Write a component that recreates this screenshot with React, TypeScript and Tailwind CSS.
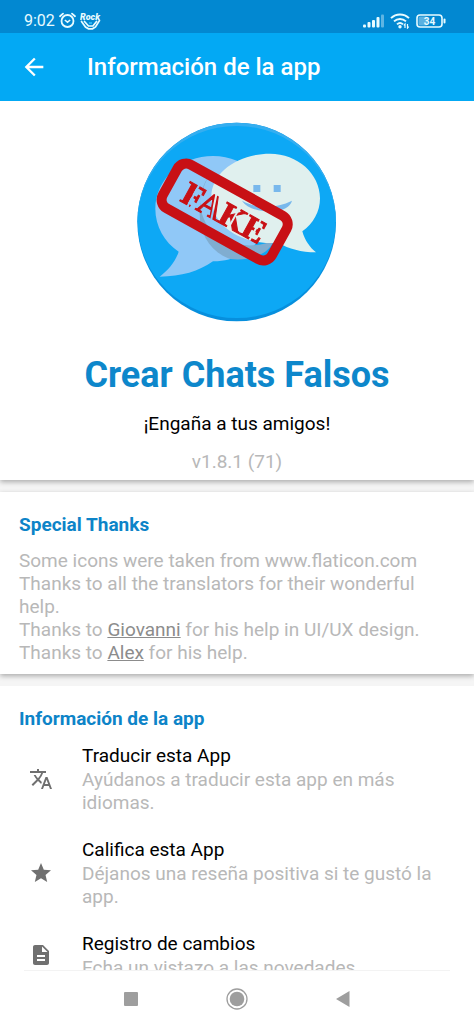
import type { ReactNode } from "react";
import {
  MdArrowBack,
  MdDescription,
  MdStar,
  MdTranslate,
} from "react-icons/md";

type InfoItem = {
  title: string;
  description: string;
  icon: ReactNode;
};

const items: InfoItem[] = [
  {
    title: "Traducir esta App",
    description: "Ayúdanos a traducir esta app en más idiomas.",
    icon: <MdTranslate size={24} />,
  },
  {
    title: "Califica esta App",
    description: "Déjanos una reseña positiva si te gustó la app.",
    icon: <MdStar size={24} />,
  },
  {
    title: "Registro de cambios",
    description: "Echa un vistazo a las novedades.",
    icon: <MdDescription size={24} />,
  },
];

const StatusBar = () => {
  return (
    <div className="flex h-[33px] shrink-0 items-center justify-between bg-[#0288d1] pt-2 pr-7 pl-6 text-[#e8fbff]">
      <div className="flex items-center gap-1">
        <span className="text-base leading-5">9:02</span>
        <svg width="17" height="17" viewBox="0 0 17 17" fill="none" stroke="currentColor">
          <circle cx="8.5" cy="9" r="6" strokeWidth="1.8" />
          <path d="M1 4.2 4 1.6M16 4.2 13 1.6" strokeWidth="1.8" strokeLinecap="round" />
          <path d="m5.8 8 2.7 2.2L11.2 8" strokeWidth="1.5" />
        </svg>
        <svg width="21" height="18" viewBox="0 0 21 18" fill="none" stroke="currentColor">
          <text
            x="0"
            y="8"
            fill="currentColor"
            stroke="none"
            className="font-[Roboto] text-[9px] font-black italic"
          >
            Rock
          </text>
          <path
            d="M1.5 9.5 5.500 15l3 1.800h4l3-1.800 4-6.500M4.500 9.500l4 4.500h4.500l3.500-4.500"
            strokeWidth="1.700"
            strokeLinecap="round"
          />
          <path d="M9 11h3" stroke="#35c4ff" strokeWidth="1.500" />
        </svg>
      </div>
      <div className="flex items-center gap-1.5">
        <svg width="21" height="14" viewBox="0 0 21 14" fill="currentColor">
          <rect x="0" y="10.500" width="3" height="3" rx="1" />
          <rect x="4.500" y="8" width="3" height="5.500" rx="1" />
          <rect x="9" y="6" width="3" height="7.500" rx="1" />
          <rect x="13.500" y="3" width="3" height="10.500" rx="1" />
          <rect x="18" y="0.500" width="3" height="13" rx="1" opacity="0.400" />
        </svg>
        <svg width="20" height="16" viewBox="0 0 20 16" fill="none" stroke="currentColor">
          <path
            d="M1 5.200c5-5 13-5 18 0M4 8.400c3.400-3.300 8.600-3.300 12 0M7 11.400c1.800-1.700 4.200-1.700 6 0"
            strokeWidth="1.900"
          />
          <circle cx="10" cy="13.800" r="1.700" fill="currentColor" stroke="none" />
          <path d="M15 15v-4l-1.200 1.400M17.500 11v4l1.200-1.400" strokeWidth="1.200" />
        </svg>
        <svg width="30" height="14" viewBox="0 0 30 14">
          <rect x="2.500" y="2.500" width="9" height="9" rx="1.500" fill="#fff" opacity="0.350" />
          <rect
            x="1"
            y="1"
            width="25"
            height="12"
            rx="3"
            fill="none"
            stroke="currentColor"
            strokeWidth="1.600"
          />
          <rect x="27.500" y="4.500" width="2" height="5" rx="1" fill="currentColor" />
          <text
            x="13.500"
            y="10.500"
            textAnchor="middle"
            fill="currentColor"
            className="font-[Roboto] text-[10px] font-bold"
          >
            34
          </text>
        </svg>
      </div>
    </div>
  );
};

const AppLogo = () => {
  return (
    <svg
      width="200"
      height="200"
      viewBox="22 19 600 600"
      role="img"
      aria-label="Crear Chats Falsos"
    >
      <defs>
        {/* stencil breaks in the stamp lettering */}
        <mask id="stencil" maskUnits="userSpaceOnUse" x="80" y="200" width="420" height="180">
          <rect x="80" y="200" width="420" height="180" fill="#fff" />
          <path
            d="M179 250v82M236 250l26 82M318 250v82M391 250v82"
            stroke="#000"
            strokeWidth="6"
          />
        </mask>
      </defs>
      <circle cx="321" cy="319" r="298" fill="#078fdd" />
      <path d="M23 319a298 298 0 0 1 596 0z" fill="#35aef0" />
      <ellipse cx="321" cy="319" rx="297" ry="288" fill="#0da8f5" />
      <path
        d="M250 121c94 0 172 70 172 158s-78 159-172 158c-42 30-95 46-160 46 26-20 47-44 57-75-43-29-70-77-70-129 0-88 79-158 173-158z"
        fill="#90c8f7"
      />
      <path
        d="M250 165c-50 55-50 135 0 185 50 42 120 50 182 25-14 40-70 62-130 55-60-20-92-76-92-134 0-60 14-100 40-131z"
        fill="#80add0"
      />
      <path
        d="M421 114c83 0 150 60 150 134 0 40-20 76-53 99 8 28 22 48 41 63-44-1-82-10-112-29-8 1-17 1-26 1-100-2-176-58-176-138 0-76 83-130 176-130z"
        fill="#e0f0ee"
      />
      <path d="M371 208h21v21h-21zM432 208h21v21h-21z" fill="#78b8ec" />
      <path
        d="M337 255c46 24 100 25 150 0-5 18-27 31-57 33-40 0-78-9-93-33z"
        fill="#78b8ec"
      />
      <g transform="rotate(29 285 289)">
        <rect
          x="98"
          y="214"
          width="374"
          height="150"
          rx="30"
          fill="none"
          stroke="#c81015"
          strokeWidth="30"
        />
        <text
          x="285"
          y="325"
          textAnchor="middle"
          fill="#c81015"
          stroke="#c81015"
          strokeWidth="3"
          mask="url(#stencil)"
          className="font-['Liberation_Serif'] text-[101px] font-bold"
        >
          FAKE
        </text>
      </g>
    </svg>
  );
};

const SectionTitle = ({ children }: { children: ReactNode }) => {
  return (
    <h2 className="text-[19px] leading-6 font-bold text-[#0d84c8]">
      {children}
    </h2>
  );
};

const App = () => {
  return (
    <div className="flex h-screen flex-col bg-white font-[Roboto,sans-serif]">
      <StatusBar />
      <header className="flex h-[68px] shrink-0 items-center gap-[39px] bg-[#03a9f4] px-5 text-white">
        <button type="button" aria-label="Volver">
          <MdArrowBack size={28} />
        </button>
        <h1 className="text-2xl font-medium">Información de la app</h1>
      </header>

      <main className="flex min-h-0 flex-1 flex-col gap-3 overflow-hidden bg-[#f5f5f5]">
        <section className="flex shrink-0 flex-col items-center bg-white pt-[21px] pb-[3px] shadow-[0_2px_5px_rgba(0,0,0,0.3)]">
          <AppLogo />
          <h2 className="mt-[27px] text-4xl leading-[52px] font-bold text-[#0d87cb]">
            Crear Chats Falsos
          </h2>
          <p className="mt-2 text-[19px] leading-[30px] text-black">
            ¡Engaña a tus amigos!
          </p>
          <p className="mt-2 text-[19px] leading-[30px] text-[#b8b8b8]">
            v1.8.1 (71)
          </p>
        </section>

        <section className="shrink-0 bg-white px-[19px] pt-[21px] pb-[10px] shadow-[0_2px_5px_rgba(0,0,0,0.3)]">
          <SectionTitle>Special Thanks</SectionTitle>
          <p className="mt-3 text-[19px] leading-[23px] text-[#b8b8b8]">
            Some icons were taken from www.flaticon.com
            <br />
            Thanks to all the translators for their wonderful help.
            <br />
            Thanks to{" "}
            <a href="#giovanni" className="text-[#8c8c8c] underline">
              Giovanni
            </a>{" "}
            for his help in UI/UX design.
            <br />
            Thanks to{" "}
            <a href="#alex" className="text-[#8c8c8c] underline">
              Alex
            </a>{" "}
            for his help.
          </p>
        </section>

        <section className="min-h-0 flex-1 overflow-hidden bg-white px-[19px] pt-[21px]">
          <SectionTitle>Información de la app</SectionTitle>
          <ul className="mt-3">
            {items.map((item) => (
              <li key={item.title} className="mb-[23px]">
                <button
                  type="button"
                  className="flex w-full items-center text-left text-[19px]"
                >
                  <span className="w-[63px] shrink-0 pl-[10px] text-[#707070]">
                    {item.icon}
                  </span>
                  <span>
                    <span className="block leading-[25px] text-black">
                      {item.title}
                    </span>
                    <span className="block leading-[23px] text-[#b8b8b8]">
                      {item.description}
                    </span>
                  </span>
                </button>
              </li>
            ))}
          </ul>
        </section>
      </main>

      <nav className="mx-6 flex h-[57px] shrink-0 items-center justify-center gap-[84px] border-t border-[#f3f3f3] text-[#9e9e9e]">
        <button type="button" aria-label="Recientes">
          <svg width="22" height="22" viewBox="0 0 22 22" fill="currentColor">
            <rect x="4" y="4" width="14" height="14" rx="1" />
          </svg>
        </button>
        <button type="button" aria-label="Inicio">
          <svg width="22" height="22" viewBox="0 0 22 22" fill="currentColor">
            <circle cx="11" cy="11" r="10" fill="none" stroke="currentColor" strokeWidth="1.3" />
            <circle cx="11" cy="11" r="7.3" />
          </svg>
        </button>
        <button type="button" aria-label="Atrás">
          <svg width="22" height="22" viewBox="0 0 22 22" fill="currentColor">
            <path d="M4 11 17.500 3v16z" />
          </svg>
        </button>
      </nav>
    </div>
  );
};

export default App;
